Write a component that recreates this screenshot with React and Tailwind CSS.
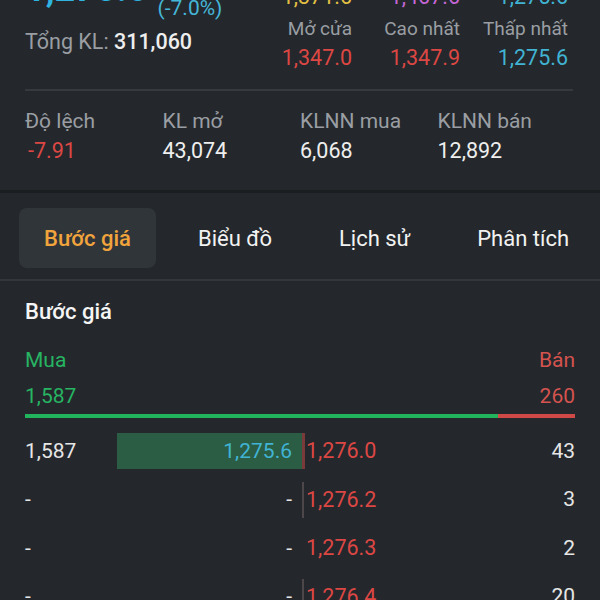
import React from "react";

const F = { fontFamily: "Roboto, 'Noto Sans', sans-serif" };

function Stat({ label, value, valueClass }) {
  return (
    <div className="flex flex-col">
      <div className="text-[21px] leading-[29px] text-[#9a9ea3]">{label}</div>
      <div className={"text-[21.5px] leading-[29px] " + valueClass}>{value}</div>
    </div>
  );
}

function Row({ buyVol, buyPrice, sellPrice, sellVol, highlight, sep }) {
  return (
    <div className="flex items-center h-[48.5px] px-[25px]">
      <div className="w-[92px] text-[21px] text-[#e6e6e6]">{buyVol}</div>
      <div className="w-[185px] h-[36px] flex items-center justify-end pr-[10px] relative">
        {highlight && <div className="absolute inset-0 bg-[#2a5d44]" />}
        <span className={"relative text-[21px] " + (highlight ? "text-[#41b3d3]" : "text-[#e6e6e6]")}>
          {buyPrice}
        </span>
      </div>
      <div className="w-[4px] h-[36px] flex justify-start">
        {sep && <div className={"h-full " + sep} />}
      </div>
      <div className="flex-1 text-[21.5px] text-[#dc4744]">{sellPrice}</div>
      <div className="text-[21px] text-[#e6e6e6]">{sellVol}</div>
    </div>
  );
}

export default function App() {
  return (
    <div className="w-[600px] h-[600px] overflow-hidden bg-[#24282c] text-[#e6e6e6]" style={F}>
      {/* Section 1 */}
      <div className="mx-[25px] mr-[27px] h-[91px] border-b-2 border-[#363a3f] flex justify-between items-start">
        <div className="flex flex-col">
          <div className="flex items-start mt-[-29px]">
            <span className="text-[36px] leading-[36px] font-bold text-[#2fb3e0]">1,275.6</span>
            <span className="ml-[10px] mt-[25px] text-[21px] leading-[24px] text-[#45b6d8]">(-7.0%)</span>
          </div>
          <div className="mt-[8px] text-[21.5px] leading-[28px]">
            <span className="text-[#9a9ea3]">Tổng KL: </span>
            <span className="font-medium text-[#eeeeee]">311,060</span>
          </div>
        </div>
        <div className="flex flex-col w-[324px] mr-[5px] mt-[-18px] text-right">
          <div className="grid grid-cols-3 text-[21.5px] leading-[29px]">
            <div className="text-[#e3c044]">1,371.6</div>
            <div className="text-[#c466d6]">1,467.6</div>
            <div className="text-[#41b3d3]">1,275.6</div>
          </div>
          <div className="mt-[3px] grid grid-cols-3 text-[19px] leading-[29px] text-[#9a9ea3]">
            <div>Mở cửa</div>
            <div>Cao nhất</div>
            <div>Thấp nhất</div>
          </div>
          <div className="grid grid-cols-3 text-[21.5px] leading-[29px]">
            <div className="text-[#dc4744]">1,347.0</div>
            <div className="text-[#dc4744]">1,347.9</div>
            <div className="text-[#41b3d3]">1,275.6</div>
          </div>
        </div>
      </div>

      {/* Section 2 */}
      <div className="h-[99px] px-[25px] pt-[16px] grid grid-cols-4 content-start">
        <Stat label="Độ lệch" value="-7.91" valueClass="text-[#dc4744] pl-[3px]" />
        <Stat label="KL mở" value="43,074" valueClass="text-[#eeeeee]" />
        <Stat label="KLNN mua" value="6,068" valueClass="text-[#eeeeee]" />
        <Stat label="KLNN bán" value="12,892" valueClass="text-[#eeeeee]" />
      </div>
      <div className="h-[3px] bg-[#1b1e21]" />

      {/* Tabs */}
      <div className="h-[88px] pt-[15px] pl-[19px] flex items-start gap-[17px] border-b-2 border-[#33373c]">
        <div className="h-[60px] px-[25px] flex items-center rounded-[8px] bg-[#30353a] text-[22px] font-medium text-[#f1a43c]">
          Bước giá
        </div>
        <div className="h-[60px] px-[25px] flex items-center text-[22px] text-[#f2f2f2]">Biểu đồ</div>
        <div className="h-[60px] px-[25px] flex items-center text-[22px] text-[#f2f2f2]">Lịch sử</div>
        <div className="h-[60px] px-[25px] flex items-center text-[22px] text-[#f2f2f2]">Phân tích</div>
      </div>

      {/* Order book */}
      <div className="px-[25px] pt-[17px]">
        <div className="text-[22px] leading-[28px] font-medium text-[#f5f5f5]">Bước giá</div>
        <div className="mt-[20px] flex justify-between text-[21px] leading-[28px]">
          <span className="text-[#27b463]">Mua</span>
          <span className="text-[#d4534f]">Bán</span>
        </div>
        <div className="mt-[8px] flex justify-between text-[21px] leading-[28px]">
          <span className="text-[#27b463]">1,587</span>
          <span className="text-[#d4534f]">260</span>
        </div>
        <div className="mt-[4px] h-[4px] flex">
          <div className="w-[473px] bg-[#22b45c]" />
          <div className="flex-1 bg-[#cf4a46]" />
        </div>
      </div>
      <div className="mt-[9px]">
        <Row buyVol="1,587" buyPrice="1,275.6" sellPrice="1,276.0" sellVol="43" highlight sep="w-[3px] bg-[#7a3a3a]" />
        <Row buyVol="-" buyPrice="-" sellPrice="1,276.2" sellVol="3" sep="w-[2px] bg-[#4e4749]" />
        <Row buyVol="-" buyPrice="-" sellPrice="1,276.3" sellVol="2" />
        <Row buyVol="-" buyPrice="-" sellPrice="1,276.4" sellVol="20" sep="w-[2px] bg-[#4e4749]" />
      </div>
    </div>
  );
}
